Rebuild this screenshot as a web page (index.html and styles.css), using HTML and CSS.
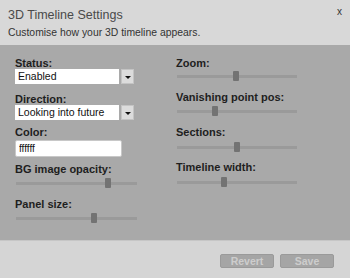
FILE: index.html
```html
<!DOCTYPE html>
<html lang="en">
<head>
    <meta charset="UTF-8">
    <title>3D Timeline Settings</title>
    <link rel="stylesheet" href="styles.css">
</head>
<body>
    <div class="dialog">
        <div class="head">
            <h1>3D Timeline Settings</h1>
            <p>Customise how your 3D timeline appears.</p>
            <span class="close">x</span>
        </div>

        <div class="body">
            <div class="col col-left">
                <div class="field f-status">
                    <label>Status:</label>
                    <div class="select">
                        <span class="select-value">Enabled</span>
                        <span class="select-btn"></span>
                    </div>
                </div>
                <div class="field f-direction">
                    <label>Direction:</label>
                    <div class="select">
                        <span class="select-value">Looking into future</span>
                        <span class="select-btn"></span>
                    </div>
                </div>
                <div class="field f-color">
                    <label>Color:</label>
                    <input class="text" type="text" value="ffffff">
                </div>
                <div class="field f-opacity">
                    <label>BG image opacity:</label>
                    <input class="range" type="range" min="0" max="100" value="77">
                </div>
                <div class="field f-panel">
                    <label>Panel size:</label>
                    <input class="range" type="range" min="0" max="100" value="65">
                </div>
            </div>

            <div class="col col-right">
                <div class="field f-zoom">
                    <label>Zoom:</label>
                    <input class="range" type="range" min="0" max="100" value="49">
                </div>
                <div class="field f-vanish">
                    <label>Vanishing point pos:</label>
                    <input class="range" type="range" min="0" max="100" value="31">
                </div>
                <div class="field f-sections">
                    <label>Sections:</label>
                    <input class="range" type="range" min="0" max="100" value="50">
                </div>
                <div class="field f-width">
                    <label>Timeline width:</label>
                    <input class="range" type="range" min="0" max="100" value="39">
                </div>
            </div>
        </div>

        <div class="foot">
            <button>Revert</button>
            <button>Save</button>
        </div>
    </div>
</body>
</html>
```

FILE: styles.css
```css
body {
    margin: 0;
    font-family: 'Liberation Sans', Arial, sans-serif;
    color: #222;
}
.dialog {
    width: 350px;
    height: 278px;
    display: flex;
    flex-direction: column;
    background-color: #a9a9a9;
}
.head {
    position: relative;
    height: 45px;
    box-sizing: border-box;
    padding: 7px 8px 0;
    background-color: #d8d8d8;
}
h1 {
    margin: 0;
    font-size: 12.5px;
    font-weight: normal;
    line-height: 16px;
    color: #4a4a4a;
}
.head p {
    margin: 3px 0 0;
    font-size: 10.4px;
    line-height: 13px;
    color: #333;
}
.close {
    position: absolute;
    top: 7px;
    right: 8px;
    font-size: 10px;
    line-height: 10px;
    color: #333;
}
.body {
    flex: 1;
    display: flex;
    padding: 12px 0 0 15px;
}
.col {
    display: flex;
    flex-direction: column;
}
.col-left {
    width: 123px;
}
.col-right {
    margin-left: 38px;
}
label {
    display: block;
    font-size: 11px;
    font-weight: bold;
    line-height: 12px;
    color: #1e1e1e;
}
.select {
    display: flex;
    width: 119px;
    height: 15px;
}
.select-value {
    flex: 1;
    background: #fff;
    font-size: 10.5px;
    line-height: 15px;
    padding-left: 3px;
    color: #111;
}
.select-btn {
    width: 11px;
    height: 13px;
    margin-left: 2px;
    background: #dcdcdc;
    border: 1px solid #c4c4c4;
    display: flex;
    align-items: center;
    justify-content: center;
}
.select-btn::after {
    content: "";
    border-left: 3px solid transparent;
    border-right: 3px solid transparent;
    border-top: 3px solid #111;
    margin-top: 2px;
}
.text {
    box-sizing: border-box;
    width: 107px;
    height: 17px;
    margin: 2px 0 0;
    padding: 0 3px;
    border: 1px solid #c8c8c8;
    border-radius: 2px;
    background: #fff;
    font-family: inherit;
    font-size: 10px;
    color: #111;
    outline: none;
}
.range {
    -webkit-appearance: none;
    appearance: none;
    display: block;
    width: 121px;
    height: 10px;
    margin: 3px 0 0 1px;
    background: transparent;
}
.range::-webkit-slider-runnable-track {
    height: 3px;
    background: #9a9a9a;
}
.range::-webkit-slider-thumb {
    -webkit-appearance: none;
    width: 6px;
    height: 10px;
    margin-top: -4px;
    background: #737373;
    border-radius: 1px;
}
.f-direction { margin-top: 9px; }
.f-color { margin-top: 6px; }
.f-opacity { margin-top: 6px; }
.f-panel { margin-top: 10px; }
.col-right .range { width: 120px; margin-left: 1px; }
.f-zoom .range { margin-top: 2px; }
.f-vanish { margin-top: 10px; }
.f-sections { margin-top: 10px; }
.f-sections .range { margin-top: 4px; }
.f-width { margin-top: 9px; }
.f-width .range { margin-top: 4px; }
.foot {
    height: 38px;
    display: flex;
    justify-content: flex-end;
    align-items: flex-start;
    gap: 6px;
    padding: 13px 16px 0 0;
    box-sizing: border-box;
    background-color: #d5d5d5;
    border-top: 1px solid #c6c6c6;
}
button {
    width: 54px;
    height: 14px;
    padding: 0;
    border: 1px solid #9a9a9a;
    border-radius: 2px;
    background: #a5a5a5;
    color: #cdcdcd;
    font-family: inherit;
    font-size: 10.5px;
    font-weight: bold;
    line-height: 12px;
}
```
